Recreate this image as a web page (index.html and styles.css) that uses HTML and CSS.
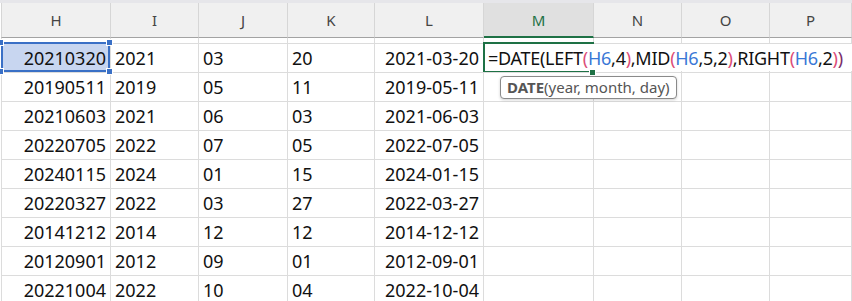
FILE: index.html
```html
<!DOCTYPE html>
<html lang="en">
<head>
  <meta charset="UTF-8" />
  <title>Sheet</title>
  <link rel="stylesheet" href="styles.css">
</head>
<body>
  <div class="topbar"></div>

  <div class="row head">
    <div class="cell">H</div>
    <div class="cell">I</div>
    <div class="cell">J</div>
    <div class="cell">K</div>
    <div class="cell">L</div>
    <div class="cell active-col">M</div>
    <div class="cell">N</div>
    <div class="cell">O</div>
    <div class="cell">P</div>
  </div>

  <!-- row 5, scrolled mostly out of view -->
  <div class="row stub">
    <div class="cell"></div><div class="cell"></div><div class="cell"></div>
    <div class="cell"></div><div class="cell"></div><div class="cell"></div>
    <div class="cell"></div><div class="cell"></div><div class="cell"></div>
  </div>

  <div class="row">
    <div class="cell num ref">
      20210320
      <span class="ref-box"></span>
      <span class="handle tl"></span><span class="handle tr"></span>
      <span class="handle bl"></span><span class="handle br"></span>
    </div>
    <div class="cell">2021</div>
    <div class="cell">03</div>
    <div class="cell">20</div>
    <div class="cell num">2021-03-20</div>
    <div class="cell editing">
      <span class="active-box"></span>
      <div class="editor">=DATE(LEFT<span class="p">(</span><span class="r">H6</span>,4<span class="p">)</span>,MID<span class="p">(</span><span class="r">H6</span>,5,2<span class="p">)</span>,RIGHT<span class="p">(</span><span class="r">H6</span>,2<span class="p">)</span><span class="p2">)</span></div>
      <span class="fill-handle"></span>
      <div class="tip"><b>DATE</b>(year, month, day)</div>
    </div>
    <div class="cell"></div>
    <div class="cell"></div>
    <div class="cell"></div>
  </div>

  <div class="row">
    <div class="cell num">20190511</div><div class="cell">2019</div><div class="cell">05</div><div class="cell">11</div>
    <div class="cell num">2019-05-11</div><div class="cell"></div><div class="cell"></div><div class="cell"></div><div class="cell"></div>
  </div>
  <div class="row">
    <div class="cell num">20210603</div><div class="cell">2021</div><div class="cell">06</div><div class="cell">03</div>
    <div class="cell num">2021-06-03</div><div class="cell"></div><div class="cell"></div><div class="cell"></div><div class="cell"></div>
  </div>
  <div class="row">
    <div class="cell num">20220705</div><div class="cell">2022</div><div class="cell">07</div><div class="cell">05</div>
    <div class="cell num">2022-07-05</div><div class="cell"></div><div class="cell"></div><div class="cell"></div><div class="cell"></div>
  </div>
  <div class="row">
    <div class="cell num">20240115</div><div class="cell">2024</div><div class="cell">01</div><div class="cell">15</div>
    <div class="cell num">2024-01-15</div><div class="cell"></div><div class="cell"></div><div class="cell"></div><div class="cell"></div>
  </div>
  <div class="row">
    <div class="cell num">20220327</div><div class="cell">2022</div><div class="cell">03</div><div class="cell">27</div>
    <div class="cell num">2022-03-27</div><div class="cell"></div><div class="cell"></div><div class="cell"></div><div class="cell"></div>
  </div>
  <div class="row">
    <div class="cell num">20141212</div><div class="cell">2014</div><div class="cell">12</div><div class="cell">12</div>
    <div class="cell num">2014-12-12</div><div class="cell"></div><div class="cell"></div><div class="cell"></div><div class="cell"></div>
  </div>
  <div class="row">
    <div class="cell num">20120901</div><div class="cell">2012</div><div class="cell">09</div><div class="cell">01</div>
    <div class="cell num">2012-09-01</div><div class="cell"></div><div class="cell"></div><div class="cell"></div><div class="cell"></div>
  </div>
  <div class="row">
    <div class="cell num">20221004</div><div class="cell">2022</div><div class="cell">10</div><div class="cell">04</div>
    <div class="cell num">2022-10-04</div><div class="cell"></div><div class="cell"></div><div class="cell"></div><div class="cell"></div>
  </div>
</body>
</html>
```

FILE: styles.css
```css
body {
  margin: 0;
  font-family: "Noto Sans", "DejaVu Sans", sans-serif;
  background: #fff;
  color: #111;
  overflow: hidden;
}

.topbar {
  height: 3px;
  background: #e6e6ea;
}

.row {
  display: grid;
  grid-template-columns: 110px 88px 89px 87px 109px 110px 88px 88px 1fr;
  padding-left: 1px;
}

.cell {
  box-sizing: border-box;
  height: 29px;
  padding: 0 4px;
  border-right: 1px solid #dcdcdc;
  border-bottom: 1px solid #dcdcdc;
  font-size: 18px;
  line-height: 28px;
  white-space: nowrap;
}

.row .cell:first-child {
  border-left: 1px solid #dcdcdc;
}

.num {
  text-align: right;
}

/* column letters */
.head .cell {
  height: 35px;
  padding-top: 1px;
  background: #f0f0f0;
  border-right-color: #d6d6d6;
  border-bottom-color: #a3a3a3;
  color: #444;
  font-size: 15px;
  line-height: 33px;
  text-align: center;
}

.head .cell:first-child {
  border-left-color: #d6d6d6;
}

.head .active-col {
  background: #e0e0e0;
  color: #1e7145;
  border-bottom: 2px solid #1e7145;
}

.stub .cell {
  height: 6px;
}

/* referenced cell H6 */
.ref {
  position: relative;
  background: #c8d6f0;
}

.ref-box {
  position: absolute;
  top: -2px;
  left: -1px;
  right: 0;
  bottom: 0;
  border: 2px solid #3a70c6;
}

.handle {
  position: absolute;
  width: 5px;
  height: 5px;
  background: #3a70c6;
  border: 1px solid #fff;
}

.handle.tl { top: -5px; left: -5px; }
.handle.tr { top: -5px; right: -3px; }
.handle.bl { bottom: -3px; left: -5px; }
.handle.br { bottom: -3px; right: -3px; }

/* cell being edited */
.editing {
  position: relative;
}

.active-box {
  position: absolute;
  top: -2px;
  left: -1px;
  right: -1px;
  bottom: 0;
  border: 2px solid #1e7145;
  border-right: 0;
}

.editor {
  position: absolute;
  top: 0;
  left: 1px;
  width: 367px;
  height: 27px;
  padding-left: 3px;
  box-sizing: border-box;
  background: #fff;
  z-index: 2;
  color: #111;
  letter-spacing: -0.27px;
}

.editor .p { color: #dc4c78; }
.editor .p2 { color: #7a2e6a; }
.editor .r { color: #3a78d6; }

.fill-handle {
  position: absolute;
  right: -3px;
  bottom: -4px;
  width: 5px;
  height: 5px;
  background: #1e7145;
  border: 1px solid #fff;
  z-index: 3;
}

.tip {
  position: absolute;
  top: 32px;
  left: 16px;
  height: 23px;
  box-sizing: border-box;
  padding: 0 6px;
  background: #fff;
  border: 1px solid #8a8a8a;
  border-radius: 4px;
  box-shadow: 0 1px 3px rgba(0, 0, 0, 0.18);
  color: #555;
  font-size: 15px;
  line-height: 20px;
  z-index: 4;
}

.tip b {
  color: #555;
}
```
